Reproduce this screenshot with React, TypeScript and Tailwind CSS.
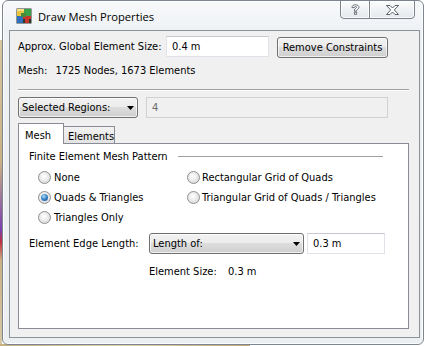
import React from "react";

function Radio({ checked }: { checked?: boolean }) {
  return (
    <span className="relative flex h-[13px] w-[13px] shrink-0 items-center justify-center rounded-full border border-[#8e8f8f] bg-[radial-gradient(circle_at_45%_40%,#ffffff_0%,#f0f0f0_35%,#cfcfcf_100%)]">
      {checked && (
        <span className="h-[7px] w-[7px] rounded-full bg-[radial-gradient(circle_at_40%_35%,#b8e0fa_0%,#3b86c8_45%,#0f4f92_100%)]" />
      )}
    </span>
  );
}

function Arrow() {
  return (
    <svg width="7" height="4" viewBox="0 0 7 4" className="shrink-0">
      <path d="M0 0H7L3.5 4Z" fill="#000" />
    </svg>
  );
}

function Combo({ label, w }: { label: string; w: string }) {
  return (
    <div
      className={`flex h-[21px] ${w} items-center rounded-[3px] border border-[#707070] bg-[linear-gradient(#f2f2f2_0%,#ebebeb_50%,#dddddd_50%,#cfcfcf_100%)] pl-[3px] pr-[3px] shadow-[inset_0_0_0_1px_rgba(255,255,255,0.7)]`}
    >
      <span className="flex-1 whitespace-nowrap">{label}</span>
      <Arrow />
    </div>
  );
}

function AppIcon() {
  return (
    <svg width="16" height="16" viewBox="0 0 16 16" className="shrink-0">
      <rect x="0.5" y="0.5" width="15" height="15" fill="#2e3b2e" />
      <rect x="1" y="1" width="7" height="7" fill="#e8c640" />
      <rect x="1" y="1" width="7" height="2" fill="#f6e08a" />
      <rect x="8" y="1" width="7" height="7" fill="#3aa34a" />
      <rect x="1" y="8" width="6" height="7" fill="#2f6fc0" />
      <rect x="7" y="8" width="8" height="3" fill="#c8342a" />
      <rect x="9" y="11" width="4" height="4" fill="#c8342a" />
      <rect x="5" y="5" width="5" height="4" fill="#4a8a3a" />
    </svg>
  );
}

export default function App() {
  return (
    <div className="relative h-[346px] w-[427px] overflow-hidden bg-white font-['DejaVu_Sans_Condensed','Liberation_Sans',sans-serif] text-[11px] leading-[13px] text-black">
      {/* desktop behind window */}
      <div className="absolute left-0 top-[40px] h-[306px] w-[2px] bg-[linear-gradient(#d9c7a0_0%,#c9b184_40%,#7a3fb0_62%,#c03040_66%,#c9b184_72%,#d8c8a8_100%)]" />
      <div className="absolute bottom-0 left-0 h-[2px] w-[250px] bg-[linear-gradient(90deg,#c8b080,#e0cfa8,#c8a878)]" />

      {/* window */}
      <div className="relative ml-[2px] flex h-[345px] w-[422px] flex-col rounded-[6px] border border-[#7d868f] bg-[linear-gradient(#f8f9fb_0%,#eef1f4_30px,#eceff2_100%)] pb-[6px] pl-[6px] pr-[3px] shadow-[inset_0_0_0_1px_rgba(255,255,255,0.85)]">
        {/* title bar */}
        <div className="flex h-[29px] shrink-0 items-start">
          <div className="ml-[7px] mt-[7px]">
            <AppIcon />
          </div>
          <div className="ml-[6px] mt-[8px] whitespace-nowrap font-['Open_Sans','Noto_Sans',sans-serif] text-[11.2px] leading-[16px] text-black">
            Draw Mesh Properties
          </div>
          <div className="flex-1" />
          <div className="-mt-px mr-[5px] flex h-[19px]">
            <div className="flex h-full w-[30px] items-center justify-center rounded-bl-[4px] border border-[#7b838c] bg-[linear-gradient(#fbfcfd,#e4e8ec)] shadow-[inset_0_0_0_1px_rgba(255,255,255,0.8)]">
              <svg width="9" height="11" viewBox="0 0 9 11">
                <path
                  d="M1 3.2C1 1.6 2.5 0.8 4.5 0.8S8 1.8 8 3.3C8 4.8 6 5.2 5.6 6.4V7.2H3.4V6C3.4 4.6 5.6 4.2 5.6 3.3C5.6 2.7 5 2.5 4.5 2.5S3.3 2.8 3.3 3.6H1Z M3.4 8.2H5.6V10.3H3.4Z"
                  fill="#ffffff"
                  stroke="#4b5158"
                  strokeWidth="0.8"
                />
              </svg>
            </div>
            <div className="-ml-px flex h-full w-[46px] items-center justify-center rounded-br-[4px] border border-[#7b838c] bg-[linear-gradient(#fbfcfd,#e4e8ec)] shadow-[inset_0_0_0_1px_rgba(255,255,255,0.8)]">
              <svg width="13" height="10" viewBox="0 0 13 10">
                <path
                  d="M0.5 0.5H4L6.5 3L9 0.5H12.5L8.3 5L12.5 9.5H9L6.5 7L4 9.5H0.5L4.7 5Z"
                  fill="#ffffff"
                  stroke="#4b5158"
                  strokeWidth="0.9"
                  strokeLinejoin="round"
                />
              </svg>
            </div>
          </div>
        </div>

        {/* content */}
        <div className="flex flex-1 flex-col border border-[#8e9297] bg-[#f0f0f0] pb-[8px] pl-[8px] pr-[10px]">
          {/* row 1 */}
          <div className="mt-[5px] flex h-[21px] items-start">
            <div className="flex h-[21px] w-[148px] items-center whitespace-nowrap">Approx. Global Element Size:</div>
            <div className="flex h-[21px] w-[103px] items-center border border-[#e2e3ea] border-t-[#c5c8cf] bg-white pl-[5px]">
              0.4 m
            </div>
            <button className="ml-[8px] mt-px flex h-[21px] w-[111px] items-center justify-center whitespace-nowrap rounded-[3px] border border-[#707070] bg-[linear-gradient(#f2f2f2_0%,#ebebeb_50%,#dddddd_50%,#cfcfcf_100%)] shadow-[inset_0_0_0_1px_rgba(255,255,255,0.7)]">
              Remove Constraints
            </button>
          </div>

          {/* row 2 */}
          <div className="mt-[7px] flex whitespace-nowrap">
            <span>Mesh:</span>
            <span className="ml-[8px]">1725 Nodes, 1673 Elements</span>
          </div>

          {/* separator */}
          <div className="mt-[12px] h-px bg-[#a0a0a0]" />
          <div className="h-px bg-white" />

          {/* row 3 */}
          <div className="mt-[6px] flex">
            <Combo label="Selected Regions:" w="w-[120px]" />
            <div className="ml-[8px] flex h-[21px] w-[242px] items-center border border-[#cfd1d4] bg-[#f0f0f0] pl-[5px] text-[#6d6d6d]">
              4
            </div>
          </div>

          {/* tabs */}
          <div className="mt-[5px] flex h-[20px] items-end">
            <div className="relative z-10 -mb-px flex h-[21px] w-[46px] items-start border border-b-0 border-[#898c95] bg-white pl-[6px] pt-[5px]">
              Mesh
            </div>
            <div className="-ml-px flex h-[17px] w-[52px] items-start border border-b-0 border-[#898c95] bg-[linear-gradient(#f2f2f2,#e3e3e3)] pl-[4px] pt-[3px]">
              Elements
            </div>
          </div>

          {/* pane */}
          <div className="flex flex-1 flex-col border border-[#898c95] bg-white pl-[10px]">
            <div className="mt-[6px] flex w-[354px] items-center">
              <span className="whitespace-nowrap">Finite Element Mesh Pattern</span>
              <div className="ml-[10px] h-px flex-1 bg-[#a0a0a0]" />
            </div>

            <div className="mt-[4px] grid grid-cols-[149px_1fr] pl-[9px]">
              <div className="flex h-[20px] items-center">
                <Radio />
                <span className="ml-[3px] whitespace-nowrap">None</span>
              </div>
              <div className="flex h-[20px] items-center">
                <Radio />
                <span className="ml-[2px] whitespace-nowrap">Rectangular Grid of Quads</span>
              </div>
              <div className="flex h-[20px] items-center">
                <Radio checked />
                <span className="ml-[3px] whitespace-nowrap">Quads &amp; Triangles</span>
              </div>
              <div className="flex h-[20px] items-center">
                <Radio />
                <span className="ml-[2px] whitespace-nowrap">Triangular Grid of Quads / Triangles</span>
              </div>
              <div className="flex h-[20px] items-center">
                <Radio />
                <span className="ml-[3px] whitespace-nowrap">Triangles Only</span>
              </div>
            </div>

            <div className="mt-[6px] flex h-[21px] items-center">
              <div className="w-[120px] whitespace-nowrap">Element Edge Length:</div>
              <Combo label="Length of:" w="w-[155px]" />
              <div className="ml-[3px] flex h-[21px] w-[78px] items-center border border-[#e2e3ea] border-t-[#c5c8cf] bg-white pl-[5px]">
                0.3 m
              </div>
            </div>

            <div className="mt-[11px] flex whitespace-nowrap pl-[120px]">
              <span className="w-[79px]">Element Size:</span>
              <span>0.3 m</span>
            </div>
          </div>
        </div>
      </div>
    </div>
  );
}
